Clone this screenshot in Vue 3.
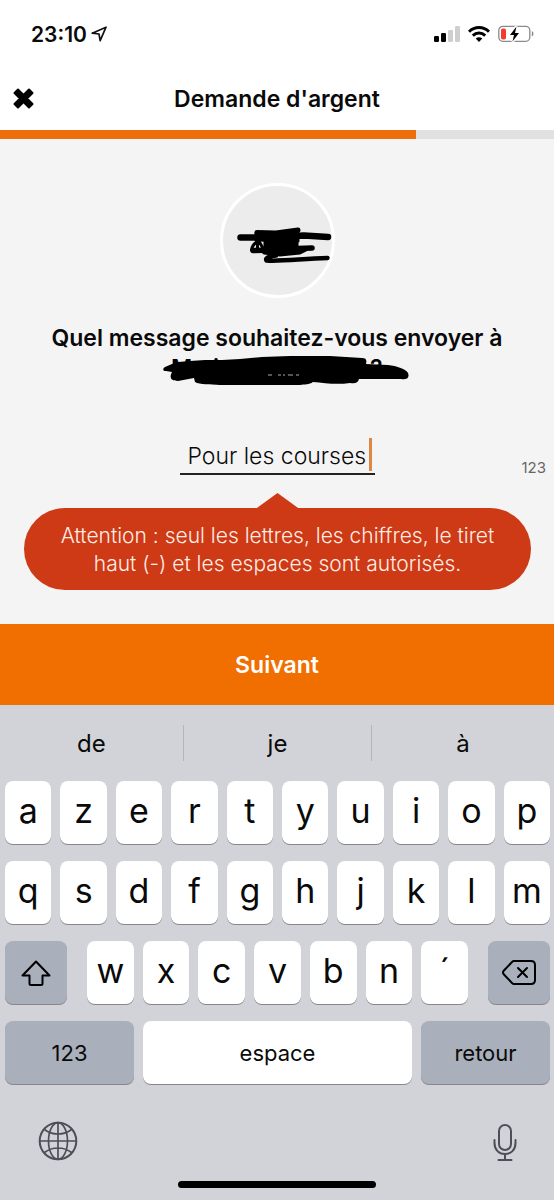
<script setup>
import { ref } from 'vue'

const message = ref('Pour les courses')
const suggestions = ['de', 'je', 'à']
const topRows = ['azertyuiop'.split(''), 'qsdfghjklm'.split('')]
const thirdRow = ['w', 'x', 'c', 'v', 'b', 'n', '´']
</script>

<template>
  <div class="screen">
    <div class="status">
      <div class="clock">
        <span>23:10</span>
        <svg width="16" height="16" viewBox="0 0 16 16" aria-hidden="true">
          <path d="M1.2 7.2 15 1.2 9.200 14.600 8 8Z" fill="none" stroke="#111" stroke-width="1.700" stroke-linejoin="round" />
        </svg>
      </div>
      <div class="indicators">
        <svg width="26" height="16" viewBox="0 0 26 16" aria-hidden="true">
          <rect x="0" y="10" width="5" height="6" rx="1.2" fill="#000" />
          <rect x="7" y="7" width="5" height="9" rx="1.2" fill="#000" />
          <rect x="14" y="4" width="5" height="12" rx="1.2" fill="#cfcfcf" />
          <rect x="21" y="0" width="5" height="16" rx="1.2" fill="#cfcfcf" />
        </svg>
        <svg width="22" height="16" viewBox="0 0 22 16" aria-hidden="true">
          <g fill="none" stroke="#000" stroke-width="3">
            <path d="M1 5.8C6.500 .2 15.500 .2 21 5.800" />
            <path d="M4.800 9.600C8.400 6.200 13.600 6.200 17.200 9.600" />
          </g>
          <path d="M11 16 7.700 12.500C9.500 10.900 12.500 10.900 14.300 12.500Z" />
        </svg>
        <svg width="36" height="18" viewBox="0 0 36 18" aria-hidden="true">
          <rect x=".8" y="1.300" width="31" height="15" rx="4" fill="none" stroke="#8b8b8b" stroke-width="1.300" />
          <path d="M33.800 6v5.500c2.200-.8 2.200-4.700 0-5.500Z" fill="#8b8b8b" />
          <rect x="3" y="3.500" width="5" height="11" rx="1.800" fill="#f23c30" />
          <path d="M18.500 1.500 12 10h4L14.500 16.500 21 8H17Z" fill="#000" stroke="#fff" stroke-width="3" paint-order="stroke" />
        </svg>
      </div>
    </div>

    <header class="header">
      <button class="close" type="button" aria-label="Fermer">
        <svg width="22" height="22" viewBox="0 0 22 22">
          <path d="M3 3 18 18M18 3 3 18" stroke="#000" stroke-width="4" stroke-linejoin="round" />
          <path d="M1.500 5 5 1.500 10.500 7 16 1.500 19.500 5 14 10.500 19.500 16 16 19.500 10.500 14 5 19.500 1.500 16 7 10.500Z" stroke="#000" stroke-width="2" stroke-linejoin="round" />
        </svg>
      </button>
      <h1>Demande d'argent</h1>
    </header>
    <div class="progress"><div class="bar"></div></div>

    <main class="main">
      <div class="avatar">
        <svg width="98" height="42" viewBox="235 225 98 42" fill="none" stroke="#000" stroke-linecap="round" stroke-linejoin="round" aria-hidden="true">
          <path d="M240.500 237.500H262L304 235.500 328 237" stroke-width="6.500" />
          <path d="M257 232.500 276 233 298 230" stroke-width="5" />
          <path d="M256 233H298V241L256 240Z" fill="#000" stroke-width="3" />
          <path d="M262 239C255 242 252 246 251.500 250H262M257.500 240V249M260 243 264 250" stroke-width="3" />
          <path d="M265 241H297V249H265Z" fill="#000" stroke-width="3" />
          <path d="M253 250.500C270 250 290 248.500 312 248" stroke-width="5.500" />
          <path d="M262 251 306 250 300 253 280 255 264 253Z" fill="#000" stroke-width="3" />
          <path d="M276 255.500C268 256.500 265 258 266.500 260.500 280 261.500 300 259 327.500 258" stroke-width="4.500" />
        </svg>
      </div>
      <h2>Quel message souhaitez-vous envoyer à</h2>
      <svg class="redacted" width="248" height="32" viewBox="162 355 248 32" aria-hidden="true">
        <text x="171" y="376">M</text>
        <text x="213" y="376">i</text>
        <text x="370" y="376">?</text>
        <path d="M165 367 172 364 178 362 190 361 205 360 222 360 240 359 262 357 290 356H330L362 358C366 358 367 360 366 364L388 365C397 366 406 369 408 373 410 378 406 380 401 379H359C358 383 355 384 350 383 336 385 325 383 313 382 309 385 305 384 300 385H220C210 384 200 385 195 382L194 378 178 381C171 381 169 378 172 372L166 371C162 371 163 368 165 367Z" />
        <path d="M268 375h4M278 375h3M283 375h2M288 375h5M296 375h3" stroke="#aaa" stroke-width="1" />
      </svg>
      <div class="entry">
        <label class="field">
          <input v-model="message" type="text" aria-label="Message" />
          <span class="caret"></span>
        </label>
        <span class="count">123</span>
      </div>
      <p class="alert" role="alert">Attention : seul les lettres, les chiffres, le tiret haut (-) et les espaces sont autorisés.</p>
    </main>

    <button class="next" type="button">Suivant</button>

    <section class="keyboard" aria-label="Clavier">
      <div class="suggestions">
        <button v-for="s in suggestions" :key="s" type="button">{{ s }}</button>
      </div>
      <div class="keys">
        <div v-for="(row, i) in topRows" :key="i" class="row">
          <button v-for="k in row" :key="k" class="key" type="button">{{ k }}</button>
        </div>
        <div class="row third">
          <button class="key grey side" type="button" aria-label="Majuscule">
            <svg width="32" height="28" viewBox="0 0 32 28" fill="none" stroke="#000" stroke-width="2" stroke-linejoin="round">
              <path d="M16 2.500 29.500 16.500H22.500V24.500C22.500 25.500 22 26 21 26H11C10 26 9.500 25.500 9.500 24.500V16.500H2.500Z" />
            </svg>
          </button>
          <div class="row letters">
            <button v-for="k in thirdRow" :key="k" class="key" type="button">{{ k }}</button>
          </div>
          <button class="key grey side" type="button" aria-label="Effacer">
            <svg width="36" height="28" viewBox="0 0 36 28" fill="none" stroke="#000" stroke-width="2" stroke-linejoin="round" stroke-linecap="round">
              <path d="M13 2H30Q34 2 34 6V21Q34 25 30 25H13Q12 25 11 24L2.500 15Q1.500 13.500 2.500 12L11 3Q12 2 13 2Z" />
              <path d="M17 9 26 18M26 9 17 18" />
            </svg>
          </button>
        </div>
        <div class="row">
          <button class="key grey word" type="button">123</button>
          <button class="key space" type="button">espace</button>
          <button class="key grey word" type="button">retour</button>
        </div>
      </div>
      <div class="tools">
        <button type="button" aria-label="Changer de langue">
          <svg width="40" height="40" viewBox="0 0 40 40" fill="none" stroke="#4d4f58" stroke-width="1.700">
            <circle cx="20" cy="20" r="18.300" stroke-width="2" />
            <ellipse cx="20" cy="20" rx="9.500" ry="18.300" />
            <path d="M20 1.700V38.300M1.700 20H38.300M6.500 8.500C14 14.500 26 14.500 33.500 8.500M6.500 31.500C14 25.500 26 25.500 33.500 31.500" />
          </svg>
        </button>
        <button type="button" aria-label="Dictée">
          <svg width="24" height="40" viewBox="0 -2 24 40" fill="none" stroke="#4d4f58" stroke-width="2" stroke-linecap="round">
            <rect x="6" y="2" width="12" height="25" rx="6" />
            <path d="M1.500 17V20C1.500 27 6 31 12 31S22.500 27 22.500 20V17M12 31V37M5.500 37H18.500" />
          </svg>
        </button>
      </div>
      <div class="home"></div>
    </section>
  </div>
</template>

<style>
body {
  background: #d1d3d9;
}
</style>

<style scoped>
.screen {
  min-height: 100vh;
  display: flex;
  flex-direction: column;
  background: #fff;
  color: #0a0a0a;
  font-family: Inter, "Liberation Sans", sans-serif;
}
button,
input {
  margin: 0;
  padding: 0;
  border: 0;
  background: none;
  color: inherit;
  font: inherit;
}
svg {
  display: block;
}
.status {
  height: 68px;
  padding: 0 20px 0 31px;
  display: flex;
  align-items: center;
  justify-content: space-between;
  box-sizing: border-box;
}
.clock {
  display: flex;
  align-items: center;
  gap: 4px;
  font-size: 21px;
  font-weight: 600;
}
.indicators {
  display: flex;
  align-items: center;
  gap: 8px;
}
.header {
  height: 62px;
  display: grid;
  grid-template-columns: 48px 1fr 48px;
  align-items: center;
}
.close {
  padding-left: 13px;
}
h1,
h2 {
  margin: 0;
  font-size: 23px;
  font-weight: 600;
  line-height: 32px;
  text-align: center;
}
.progress {
  height: 9px;
  background: #e1e1e1;
}
.bar {
  width: 75%;
  height: 100%;
  background: #ee6e0b;
}
.main {
  flex: 1;
  padding-top: 44px;
  display: flex;
  flex-direction: column;
  align-items: center;
  background: #f4f4f4;
}
.avatar {
  width: 115px;
  height: 115px;
  box-sizing: border-box;
  padding: 10px 0 0 12px;
  border: 3px solid #fff;
  border-radius: 50%;
  background: #ececec;
  display: flex;
  align-items: center;
}
.avatar svg {
  flex: none;
}
h2 {
  margin-top: 24px;
}
.redacted {
  margin: 1px 0 0 18px;
  font-size: 23px;
  font-weight: 600;
}
.entry {
  align-self: stretch;
  margin-top: 50px;
  padding: 0 8px;
  display: grid;
  grid-template-columns: 1fr auto 1fr;
  align-items: end;
}
.field {
  grid-column: 2;
  width: 195px;
  height: 38px;
  box-sizing: border-box;
  padding: 0 3px 1px 8px;
  display: flex;
  align-items: center;
  border-bottom: 2px solid #222;
}
.field input {
  flex: 1;
  min-width: 0;
  padding-top: 2px;
  outline: none;
  font-size: 23px;
  font-weight: 300;
}
.caret {
  width: 3px;
  height: 33px;
  background: #dc8743;
}
.count {
  justify-self: end;
  font-size: 15px;
  font-weight: 400;
  line-height: 14px;
  color: #666;
}
.alert {
  position: relative;
  align-self: stretch;
  margin: 33px 23px 33px 24px;
  padding: 14px 32px 12px;
  border-radius: 41px;
  background: #cd3a15;
  color: #ffeee6;
  font-size: 21px;
  font-weight: 300;
  line-height: 28px;
  text-align: center;
}
.alert::before {
  content: "";
  position: absolute;
  top: -15px;
  left: 50%;
  width: 44px;
  height: 16px;
  margin-left: -22px;
  background: #cd3a15;
  clip-path: polygon(50% 0, 100% 100%, 0 100%);
}
.next {
  height: 81px;
  background: #f16e00;
  color: #fff;
  font-size: 23px;
  font-weight: 600;
}
.keyboard {
  background: #d1d3d9;
}
.suggestions {
  height: 76px;
  display: grid;
  grid-template-columns: 33fr 34fr 33fr;
  align-items: center;
}
.suggestions button {
  height: 36px;
  font-size: 24px;
  font-weight: 400;
}
.suggestions button + button {
  border-left: 1px solid #b3b5bb;
}
.keys {
  padding: 0 4px 0 5px;
  display: flex;
  flex-direction: column;
  gap: 17px;
}
.row {
  display: flex;
  gap: 9px;
}
.third {
  gap: 20px;
}
.letters {
  flex: 1;
}
.key {
  flex: 1 1 0;
  height: 63px;
  padding-bottom: 4px;
  display: flex;
  align-items: center;
  justify-content: center;
  border-radius: 8px;
  background: #fff;
  box-shadow: 0 1px 0 #85878c;
  font-size: 34px;
  font-weight: 400;
}
.key.grey {
  padding-bottom: 0;
  background: #aaafbc;
}
.key.side {
  flex: 0 0 62px;
}
.key.word {
  flex: 0 0 129px;
  font-size: 22px;
}
.key.space {
  padding-bottom: 0;
  font-size: 22px;
}
.tools {
  padding: 37px 37px 0 38px;
  display: flex;
  justify-content: space-between;
}
.home {
  width: 198px;
  height: 7px;
  margin: 20px auto 12px;
  border-radius: 4px;
  background: #000;
}
</style>
